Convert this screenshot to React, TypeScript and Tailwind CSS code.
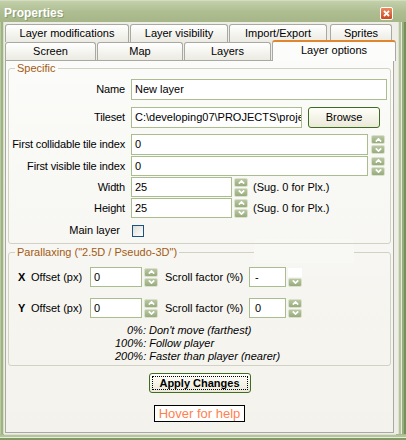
import React from 'react';

const SpinBtn = ({ up }: { up?: boolean }) => (
  <div className="w-[14px] h-[9px] rounded-[2px] border border-[#d9e1cc] bg-linear-to-b from-[#b9c7a2] to-[#98ab7c] flex items-center justify-center">
    <svg width="7" height="4" viewBox="0 0 7 4">
      <path d={up ? 'M0.8 3.6L3.5 0.9L6.2 3.6' : 'M0.8 0.4L3.5 3.1L6.2 0.4'} stroke="white" strokeWidth="1.7" fill="none" />
    </svg>
  </div>
);

const Spinner = ({ noUp }: { noUp?: boolean }) => (
  <div className="flex flex-col gap-[1px]">
    {noUp ? <div className="w-[14px] h-[9px] bg-white" /> : <SpinBtn up />}
    <SpinBtn />
  </div>
);

const TextBox = ({ value, className }: { value: string; className: string }) => (
  <div className={`flex items-center border border-[#a9bd8e] bg-white pl-[3px] overflow-hidden whitespace-nowrap ${className}`}>
    {value}
  </div>
);

const Tab = ({ label, className }: { label: string; className: string }) => (
  <div className={`flex items-center justify-center rounded-t-[3px] border border-b-0 border-[#a7a9a2] bg-linear-to-b from-white to-[#ebeae2] ${className}`}>
    {label}
  </div>
);

const Label = ({ children }: { children: React.ReactNode }) => (
  <div className="w-[116px] text-right whitespace-nowrap tracking-[-0.15px]">{children}</div>
);

export default function App() {
  return (
    <div className="w-[406px] h-[440px] flex flex-col bg-[#a8ba8c] text-[11px] text-black font-['Liberation_Sans',Arial,sans-serif]">
      {/* title bar */}
      <div className="h-[22px] flex items-center justify-between pl-[4px] pr-[13px] pt-[3px] bg-linear-to-b from-[#c3d0aa] via-[#afbe92] to-[#a5b688] border-t border-[#d4dcc2]">
        <span className="text-[12px] font-bold text-white [text-shadow:1px_1px_0_#8b9b72]">Properties</span>
        <div className="w-[13px] h-[13px] rounded-[2px] border border-white bg-linear-to-b from-[#ec8a5e] to-[#c84a20] flex items-center justify-center">
          <svg width="7" height="7" viewBox="0 0 7 7">
            <path d="M1 1L6 6M6 1L1 6" stroke="white" strokeWidth="1.8" />
          </svg>
        </div>
      </div>

      <div className="flex flex-1">
        <div className="w-[4px] flex">
          <div className="w-[1px] bg-[#b9c9a0]" />
          <div className="w-[2px] bg-[#9fb283]" />
          <div className="w-[1px] bg-[#d6dec8]" />
        </div>

        {/* client */}
        <div className="w-[392px] flex flex-col bg-[#efeee6] pl-[1px] pt-[2px] pb-[1px]">
          <div className="flex h-[18px] gap-[1px]">
            <Tab label="Layer modifications" className="w-[124px]" />
            <Tab label="Layer visibility" className="w-[98px]" />
            <Tab label="Import/Export" className="w-[98px]" />
            <Tab label="Sprites" className="w-[62px] ml-[2px]" />
          </div>
          <div className="flex h-[18px] gap-[1px] items-end">
            <Tab label="Screen" className="w-[91px] h-[18px]" />
            <Tab label="Map" className="w-[86px] h-[18px]" />
            <Tab label="Layers" className="w-[87px] h-[18px]" />
            <div className="relative z-10 -mb-[1px] w-[124px] h-[21px] flex items-center justify-center rounded-t-[3px] border border-b-0 border-[#a7a9a2] border-t-[2px] border-t-[#e0862e] bg-[#fcfcfb] pb-[2px]">
              Layer options
            </div>
          </div>

          {/* panel */}
          <div className="relative w-[389px] flex-1 flex flex-col border border-[#a7a9a2] bg-linear-to-b from-[#fbfbf9] to-[#f3f2ec] px-[2px] pt-[1px]">
            <div className="absolute left-[248px] top-[178px] w-[100px] h-[24px] bg-[#f8f8f5]" />

            <fieldset className="relative border border-[#d2d2c4] rounded-[3px] pb-[6px]">
              <legend className="ml-[6px] px-[2px] leading-[13px] text-[#a35a12]">Specific</legend>
              <div className="flex flex-col">
                <div className="flex items-center gap-[6px] mt-[4px] h-[21px]">
                  <Label>Name</Label>
                  <TextBox value="New layer" className="w-[256px] h-[21px]" />
                </div>
                <div className="flex items-center gap-[6px] mt-[7px] h-[21px]">
                  <Label>Tileset</Label>
                  <TextBox value={'C:\\developing07\\PROJECTS\\projec'} className="w-[171px] h-[21px] pl-[2px]" />
                  <div className="w-[72px] h-[21px] rounded-[3px] border border-[#3f6b22] bg-linear-to-b from-[#fffffa] to-[#ebe9d9] flex items-center justify-center">
                    Browse
                  </div>
                </div>
                <div className="flex items-center gap-[6px] mt-[6px] h-[21px]">
                  <Label>First collidable tile index</Label>
                  <TextBox value="0" className="w-[237px] h-[21px]" />
                  <div className="-ml-[3px]"><Spinner /></div>
                </div>
                <div className="flex items-center gap-[6px] mt-[1px] h-[20px]">
                  <Label>First visible tile index</Label>
                  <TextBox value="0" className="w-[237px] h-[20px]" />
                  <div className="-ml-[3px]"><Spinner /></div>
                </div>
                <div className="flex items-center gap-[6px] mt-[1px] h-[20px]">
                  <Label>Width</Label>
                  <TextBox value="25" className="w-[101px] h-[20px]" />
                  <div className="-ml-[4px]"><Spinner /></div>
                  <span className="-ml-[1px]">(Sug. 0 for Plx.)</span>
                </div>
                <div className="flex items-center gap-[6px] mt-[1px] h-[20px]">
                  <Label>Height</Label>
                  <TextBox value="25" className="w-[101px] h-[20px]" />
                  <div className="-ml-[4px]"><Spinner /></div>
                  <span className="-ml-[1px]">(Sug. 0 for Plx.)</span>
                </div>
                <div className="flex items-center mt-[6px] h-[13px]">
                  <div className="w-[116px] text-right pr-[5px]">Main layer</div>
                  <div className="ml-[7px] w-[12px] h-[12px] border border-[#1c5180] bg-linear-to-br from-[#dcdcd7] to-white" />
                </div>
              </div>
            </fieldset>

            <fieldset className="mt-[2px] border border-[#d2d2c4] rounded-[3px] pb-[2px]">
              <legend className="ml-[6px] px-[2px] leading-[13px] text-[#a35a12]">Parallaxing ("2.5D / Pseudo-3D")</legend>
              <div className="flex flex-col pl-[9px]">
                <div className="flex items-center mt-[8px] h-[20px]">
                  <span className="w-[13px] font-bold">X</span>
                  <span className="w-[59px]">Offset (px)</span>
                  <TextBox value="0" className="w-[52px] h-[20px]" />
                  <div className="ml-[2px]"><Spinner /></div>
                  <span className="ml-[7px] w-[84px] whitespace-nowrap">Scroll factor (%)</span>
                  <TextBox value="-" className="w-[37px] h-[20px] pl-[5px]" />
                  <div className="ml-[2px]"><Spinner noUp /></div>
                </div>
                <div className="flex items-center mt-[11px] h-[20px]">
                  <span className="w-[13px] font-bold">Y</span>
                  <span className="w-[59px]">Offset (px)</span>
                  <TextBox value="0" className="w-[52px] h-[20px]" />
                  <div className="ml-[2px]"><Spinner /></div>
                  <span className="ml-[7px] w-[84px] whitespace-nowrap">Scroll factor (%)</span>
                  <TextBox value="0" className="w-[37px] h-[20px] pl-[5px]" />
                  <div className="ml-[2px]"><Spinner /></div>
                </div>
                <div className="mt-[6px] flex flex-col italic leading-[13px]">
                  <span className="pl-[109px]">0%: Don't move (farthest)</span>
                  <span className="pl-[97px]">100%: Follow player</span>
                  <span className="pl-[97px]">200%: Faster than player (nearer)</span>
                </div>
              </div>
            </fieldset>

            <div className="self-center mt-[7px] w-[102px] h-[20px] rounded-[3px] border border-[#3f6b22] bg-linear-to-b from-[#fffffa] to-[#ebe9d9] p-[2px] flex">
              <div className="flex-1 flex items-center justify-center border border-dotted border-black font-bold">
                Apply Changes
              </div>
            </div>

            <div className="self-center mt-[12px] w-[91px] h-[17px] border border-black bg-white flex items-center justify-center text-[13px] text-[#ff7f50]">
              Hover for help
            </div>
          </div>
        </div>

        <div className="w-[10px] flex">
          <div className="w-[2px] bg-[#efeee6]" />
          <div className="w-[1px] bg-[#dbe2cf]" />
          <div className="w-[2px] bg-[#b5c49c]" />
          <div className="w-[1px] bg-[#e6ebdd]" />
          <div className="w-[2px] bg-[#98ad7e]" />
          <div className="w-[2px] bg-[#74915a]" />
        </div>
      </div>

      <div className="h-[6px] flex flex-col">
        <div className="h-[1px] bg-[#dbe2cf] ml-[4px] mr-[10px]" />
        <div className="h-[2px] bg-[#b5c49c]" />
        <div className="h-[1px] bg-[#e6ebdd]" />
        <div className="h-[2px] bg-[#7f9a63]" />
      </div>
    </div>
  );
}
